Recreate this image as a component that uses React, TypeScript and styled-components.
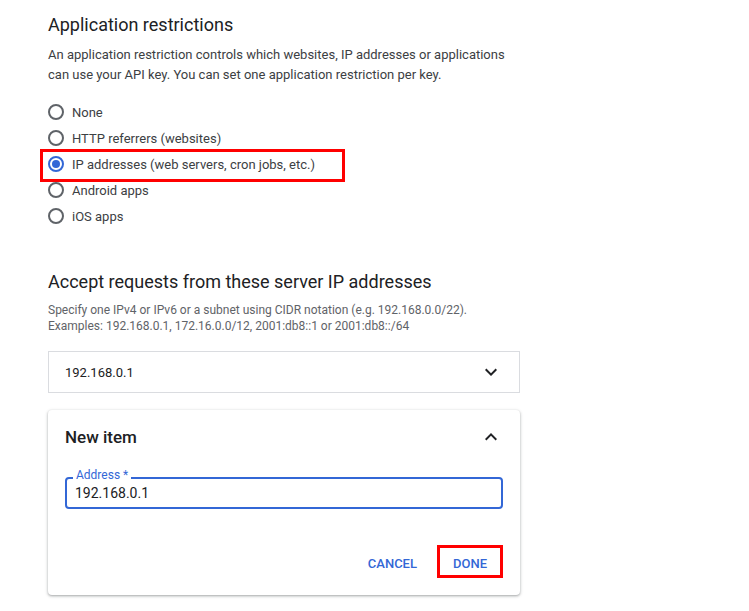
import * as React from "react";
import styled, { createGlobalStyle } from "styled-components";

const GlobalStyle = createGlobalStyle`
  body {
    margin: 0;
    background: #fff;
    font-family: Roboto, "Liberation Sans", Arial, sans-serif;
    color: #202124;
  }
`;

const BLUE = "#3367d6";

const Page = styled.div`
  width: 472px;
  padding: 13px 0 16px 48px;
`;

const Title = styled.h2`
  margin: 0;
  font-size: 18px;
  line-height: 24px;
  font-weight: 400;
  color: #202124;
`;

const Description = styled.p`
  margin: 8px 0 0;
  font-size: 13px;
  line-height: 20px;
  color: #3c4043;
  width: 480px;
`;

const RadioList = styled.div`
  margin-top: 14px;
  display: flex;
  flex-direction: column;
`;

const RadioRow = styled.label<{ $highlight?: boolean }>`
  position: relative;
  display: flex;
  align-items: center;
  gap: 8px;
  height: 26px;
  font-size: 13px;
  color: #3c4043;

  ${(p) =>
    p.$highlight &&
    `
    &::after {
      content: "";
      position: absolute;
      left: -8px;
      top: -2px;
      width: 305px;
      height: 33px;
      box-sizing: border-box;
      border: 3px solid #ff0000;
    }
  `}
`;

const RadioCircle = styled.span<{ $checked?: boolean }>`
  width: 16px;
  height: 16px;
  box-sizing: border-box;
  border-radius: 50%;
  border: 2px solid ${(p) => (p.$checked ? BLUE : "#5f6368")};
  display: flex;
  align-items: center;
  justify-content: center;

  &::before {
    content: "";
    width: 8px;
    height: 8px;
    border-radius: 50%;
    background: ${(p) => (p.$checked ? BLUE : "transparent")};
  }
`;

const SectionTitle = styled(Title)`
  margin-top: 41px;
`;

const Help = styled.p`
  margin: 8px 0 0;
  font-size: 12px;
  line-height: 16px;
  color: #5f6368;
`;

const Panel = styled.div`
  margin-top: 17px;
  height: 40px;
  border: 1px solid #dadce0;
  display: flex;
  align-items: center;
  justify-content: space-between;
  padding: 0 16px 0 16px;
  font-size: 13px;
  color: #202124;
`;

const Card = styled.div`
  margin-top: 17px;
  border-radius: 4px;
  box-shadow: 0 1px 2px rgba(60, 64, 67, 0.3), 0 1px 3px 1px rgba(60, 64, 67, 0.15);
  padding: 0 17px 17px;
`;

const CardHeader = styled.div`
  height: 54px;
  display: flex;
  align-items: center;
  justify-content: space-between;
  font-size: 17px;
  font-weight: 500;
  color: #202124;
`;

const Field = styled.div`
  position: relative;
  margin-top: 13px;
  height: 32px;
  box-sizing: border-box;
  border: 2px solid ${BLUE};
  border-radius: 4px;
  display: flex;
  align-items: center;
  padding: 0 8px;
  font-size: 14px;
  color: #202124;
`;

const FieldLabel = styled.span`
  position: absolute;
  left: 6px;
  top: -11px;
  padding: 0 3px;
  background: #fff;
  font-size: 12px;
  line-height: 14px;
  color: ${BLUE};
`;

const Actions = styled.div`
  margin-top: 36px;
  display: flex;
  justify-content: flex-end;
  gap: 4px;
`;

const TextButton = styled.button<{ $highlight?: boolean }>`
  height: 33px;
  padding: 3px 13px 0;
  box-sizing: border-box;
  border: ${(p) => (p.$highlight ? "3px solid #ff0000" : "3px solid transparent")};
  background: none;
  font-family: inherit;
  font-size: 13px;
  font-weight: 500;
  color: ${BLUE};
  display: flex;
  align-items: center;
`;

const Chevron = ({ up }: { up?: boolean }) => (
  <svg width="24" height="24" viewBox="0 0 24 24" fill="#202124">
    {up ? (
      <path d="M7.41 15.41L12 10.83l4.59 4.58L18 14l-6-6-6 6z" />
    ) : (
      <path d="M16.59 8.59L12 13.17 7.41 8.59 6 10l6 6 6-6z" />
    )}
  </svg>
);

const options = [
  "None",
  "HTTP referrers (websites)",
  "IP addresses (web servers, cron jobs, etc.)",
  "Android apps",
  "iOS apps",
];

export default function App() {
  const selected = 2;
  return (
    <Page>
      <GlobalStyle />
      <Title>Application restrictions</Title>
      <Description>
        An application restriction controls which websites, IP addresses or applications
        can use your API key. You can set one application restriction per key.
      </Description>
      <RadioList>
        {options.map((o, i) => (
          <RadioRow key={o} $highlight={i === selected}>
            <RadioCircle $checked={i === selected} />
            {o}
          </RadioRow>
        ))}
      </RadioList>

      <SectionTitle>Accept requests from these server IP addresses</SectionTitle>
      <Help>
        Specify one IPv4 or IPv6 or a subnet using CIDR notation (e.g. 192.168.0.0/22).
        <br />
        Examples: 192.168.0.1, 172.16.0.0/12, 2001:db8::1 or 2001:db8::/64
      </Help>

      <Panel>
        <span>192.168.0.1</span>
        <Chevron />
      </Panel>

      <Card>
        <CardHeader>
          <span>New item</span>
          <Chevron up />
        </CardHeader>
        <Field>
          <FieldLabel>Address *</FieldLabel>
          192.168.0.1
        </Field>
        <Actions>
          <TextButton>CANCEL</TextButton>
          <TextButton $highlight>DONE</TextButton>
        </Actions>
      </Card>
    </Page>
  );
}
